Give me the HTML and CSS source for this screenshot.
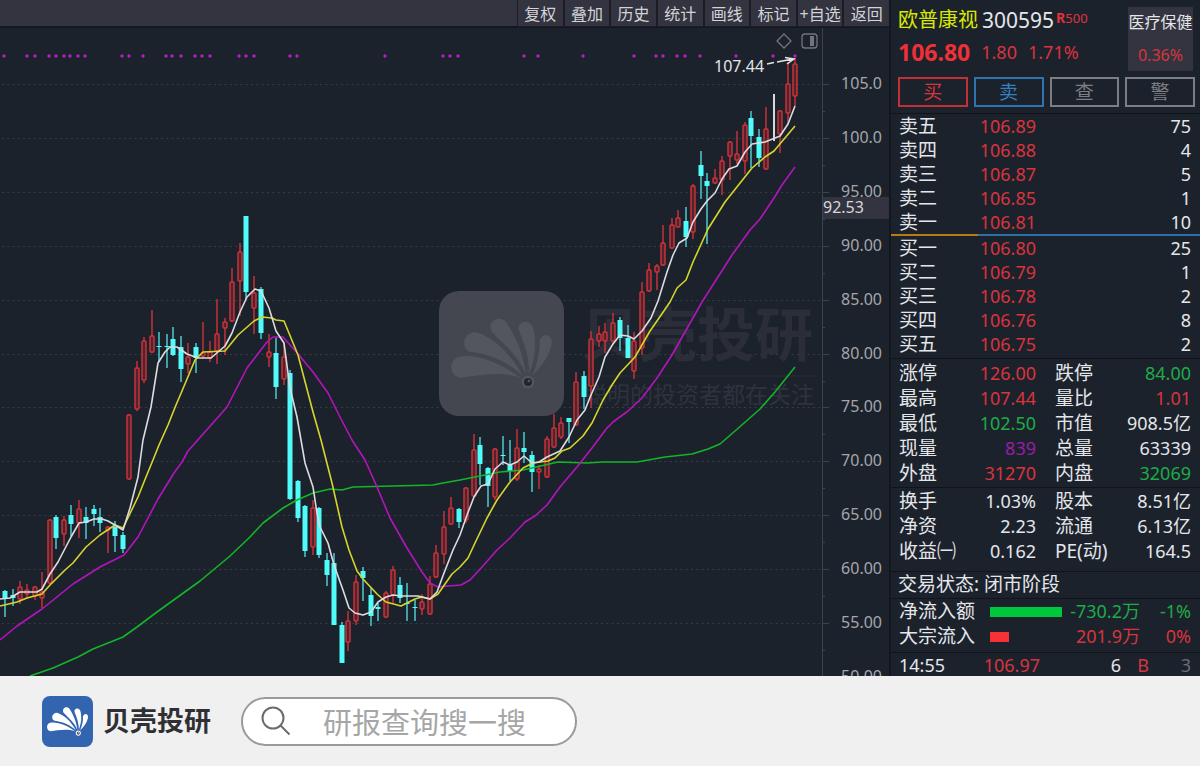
FILE: index.html
```html
<!DOCTYPE html>
<html lang="zh-CN">
<head>
<meta charset="utf-8">
<title>欧普康视 300595</title>
<link rel="stylesheet" href="styles.css">
</head>
<body>
<svg width="0" height="0" class="defs" aria-hidden="true">
  <symbol id="shell" viewBox="0 0 378 378">
    <path d="M246 262C190 222 130 193 68 197C28 202 28 256 64 262C116 256 180 240 246 262Z"/>
    <path d="M252 256C222 196 164 138 110 124C72 126 64 172 94 184C154 190 214 218 252 256Z"/>
    <path d="M262 252C256 188 228 128 202 92C176 70 144 96 160 124C194 160 244 198 262 252Z"/>
    <path d="M273 250C294 198 296 140 282 106C266 80 234 96 242 120C258 158 274 204 273 250Z"/>
    <path d="M282 256C310 228 340 190 341 152C336 126 308 130 304 152C306 188 294 228 282 256Z"/>
    <circle cx="269" cy="275" r="19"/>
    <circle class="shell-pin" cx="269" cy="275" r="12"/>
    <circle cx="272" cy="272" r="4"/>
  </symbol>
</svg>
<main class="terminal">
  <section class="chart-area">
    <nav class="toolbar">
      <div class="tools">
        <button class="tool">复权</button>
        <button class="tool">叠加</button>
        <button class="tool">历史</button>
        <button class="tool">统计</button>
        <button class="tool">画线</button>
        <button class="tool">标记</button>
        <button class="tool">+自选</button>
        <button class="tool">返回</button>
      </div>
    </nav>
    <svg class="chart" viewBox="0 28 889 648" role="img" aria-label="日K线图">
      <g id="grid"></g>
      <g class="watermark">
        <rect class="mark-box" x="439" y="291" width="125" height="125" rx="20"/>
        <use class="mark-shell" href="#shell" x="439" y="291" width="125" height="125"/>
        <text class="mark-name" x="581" y="356">贝壳投研</text>
        <path class="mark-rule" d="M582 376H815"/>
        <text class="mark-slogan" x="584" y="403">聪明的投资者都在关注</text>
      </g>
      <g id="events"></g>
      <g id="candles"></g>
      <g id="averages"></g>
      <g class="peak">
        <text x="714" y="72">107.44</text>
        <path d="M767 64L774 62.500M777 62L793 59M785 57.500L794 59L787 64"/>
      </g>
      <path class="tool-icon" d="M784 34L791 41L784 48L777 41Z"/>
      <rect class="tool-icon" x="802" y="34" width="15" height="14" rx="3"/>
      <rect class="tool-icon-fill" x="810" y="36" width="4" height="10"/>
      <g id="axis"></g>
      <rect class="cursor-box" x="823" y="197" width="66" height="22"/>
      <text class="cursor-text" x="823" y="213">92.53</text>
    </svg>
  </section>
  <aside class="quote">
    <header class="quote-head">
      <div class="quote-main">
        <div class="title-row"><h1 class="stock">欧普康视</h1><span class="code">300595</span><span class="badge"><b>R</b>500</span></div>
        <div class="price-row"><strong class="last">106.80</strong><span>1.80</span><span>1.71%</span></div>
      </div>
      <div class="sector"><span>医疗保健</span><span class="up">0.36%</span></div>
    </header>
    <div class="actions">
      <button class="action buy">买</button>
      <button class="action sell">卖</button>
      <button class="action">查</button>
      <button class="action">警</button>
    </div>
    <div class="block book">
      <table class="book-table">
        <tr><th>卖五</th><td class="up">106.89</td><td>75</td></tr>
        <tr><th>卖四</th><td class="up">106.88</td><td>4</td></tr>
        <tr><th>卖三</th><td class="up">106.87</td><td>5</td></tr>
        <tr><th>卖二</th><td class="up">106.85</td><td>1</td></tr>
        <tr><th>卖一</th><td class="up">106.81</td><td>10</td></tr>
      </table>
    </div>
    <div class="ratio"><span class="ratio-bid"></span></div>
    <div class="block bids">
      <table class="book-table">
        <tr><th>买一</th><td class="up">106.80</td><td>25</td></tr>
        <tr><th>买二</th><td class="up">106.79</td><td>1</td></tr>
        <tr><th>买三</th><td class="up">106.78</td><td>2</td></tr>
        <tr><th>买四</th><td class="up">106.76</td><td>8</td></tr>
        <tr><th>买五</th><td class="up">106.75</td><td>2</td></tr>
      </table>
    </div>
    <div class="block stats">
      <table class="stat-table">
        <tr><th>涨停</th><td class="up">126.00</td><th>跌停</th><td class="down">84.00</td></tr>
        <tr><th>最高</th><td class="up">107.44</td><th>量比</th><td class="up">1.01</td></tr>
        <tr><th>最低</th><td class="down">102.50</td><th>市值</th><td>908.5亿</td></tr>
        <tr><th>现量</th><td class="volume">839</td><th>总量</th><td>63339</td></tr>
        <tr><th>外盘</th><td class="up">31270</td><th>内盘</th><td class="down">32069</td></tr>
      </table>
    </div>
    <div class="block basics">
      <table class="stat-table">
        <tr><th>换手</th><td>1.03%</td><th>股本</th><td>8.51亿</td></tr>
        <tr><th>净资</th><td>2.23</td><th>流通</th><td>6.13亿</td></tr>
        <tr><th>收益㈠</th><td>0.162</td><th>PE(动)</th><td>164.5</td></tr>
      </table>
    </div>
    <div class="block status">交易状态: 闭市阶段</div>
    <div class="block flows">
      <table class="flow-table">
        <tr><th>净流入额</th><td><span class="bar bar-out"></span></td><td class="down">-730.2万</td><td class="down">-1%</td></tr>
        <tr><th>大宗流入</th><td><span class="bar bar-in"></span></td><td class="up">201.9万</td><td class="up">0%</td></tr>
      </table>
    </div>
    <div class="block">
      <table class="tick-table">
        <tr><td>14:55</td><td class="up">106.97</td><td>6</td><td class="up">B</td><td class="dim">3</td></tr>
      </table>
    </div>
  </aside>
</main>
<footer class="footer">
  <svg class="logo" viewBox="0 0 51 51" aria-hidden="true"><rect class="logo-box" width="51" height="51" rx="8"/><use class="logo-shell" href="#shell" width="51" height="51"/></svg>
  <span class="brand">贝壳投研</span>
  <label class="search">
    <svg class="search-icon" viewBox="0 0 30 30" aria-hidden="true"><circle cx="12" cy="12" r="10.500"/><path d="M19.500 19.500L28.500 28.500"/></svg>
    <input type="text" placeholder="研报查询搜一搜" aria-label="研报查询">
  </label>
</footer>
<script src="script.js"></script>
</body>
</html>
```
FILE: styles.css
```css
* { box-sizing: border-box; }
body {
  margin: 0;
  background: #f0f0f0;
  color: #e4e6ea;
  font-family: "Noto Sans", "Noto Sans CJK SC", sans-serif;
}
.defs { position: absolute; }
button { font-family: inherit; margin: 0; padding: 0; }

.terminal {
  display: grid;
  grid-template-columns: minmax(0, 1fr) 311px;
  background: #1c222c;
  overflow: hidden;
}

/* chart */
.toolbar {
  display: flex;
  justify-content: flex-end;
  height: 28px;
  background: #33343f;
  border-bottom: 2px solid #151820;
}
.tools { display: flex; gap: 2px; width: 371px; }
.tool {
  flex: 1;
  min-width: 0;
  border: 0;
  background: #33343f;
  box-shadow: 0 0 0 1px #1a1d27;
  color: #d2d3d8;
  font-size: 16px;
  line-height: 24px;
  padding-top: 2px;
  white-space: nowrap;
}
.chart { display: block; width: 100%; height: auto; }
.chart text { font-family: "Noto Sans", "Noto Sans CJK SC", sans-serif; }
.grid-line { stroke: #363c48; stroke-width: 1; stroke-dasharray: 2 3.300; }
.mark-box { fill: #44474f; }
.mark-shell { fill: #53565e; }
.mark-shell, .logo-shell { --pin: #23262e; }
.shell-pin { fill: var(--pin); }
.logo-shell { --pin: #56606f; fill: #ffffff; }
.mark-name { fill: #2b2d38; font-size: 58px; font-weight: 700; }
.mark-slogan { fill: #2f323d; font-size: 23px; }
.mark-rule { stroke: #2b2d38; stroke-width: 1; }
.event { fill: #b41fc0; }
.rise { stroke: #d2323a; stroke-width: 1.400; fill: #50242c; }
.fall { stroke: #4fd8dc; stroke-width: 1.400; fill: #4ffcfa; }
.fall-body { stroke: none; fill: #4ffcfa; }
.flat { stroke: #d8d8dc; stroke-width: 2; }
.ma { fill: none; stroke-width: 1.600; stroke-linejoin: round; }
.ma5 { stroke: #dcdce0; }
.ma10 { stroke: #d6d62a; }
.ma20 { stroke: #b414bc; }
.ma60 { stroke: #14b428; }
.peak text { fill: #e4e4e6; font-size: 16px; }
.peak path { fill: none; stroke: #e4e4e6; stroke-width: 1.500; }
.tool-icon { fill: none; stroke: #70747c; stroke-width: 1.300; }
.tool-icon-fill { fill: #70747c; }
.axis-line { stroke: #3d434e; stroke-width: 1; fill: none; }
.axis-label { fill: #a4a6ab; font-size: 16px; text-anchor: end; }
.cursor-box { fill: #33343f; }
.cursor-text { fill: #d6d8dc; font-size: 16px; }

/* quote panel */
.quote {
  height: 0;
  min-height: 100%;
  border-left: 2px solid #14171e;
  overflow: hidden;
  font-size: 18px;
}
.quote-head { display: flex; justify-content: space-between; padding: 7px 7px 0 7px; height: 71px; }
.title-row { display: flex; align-items: center; height: 26px; }
.stock { margin: 0 4px 0 0; color: #d8e800; font-size: 20px; font-weight: 400; line-height: 26px; }
.code { font-size: 21px; line-height: 26px; }
.badge { margin-left: 2px; padding-bottom: 5px; color: #e0333b; font-size: 13px; line-height: 20px; }
.badge b { font-size: 14px; }
.price-row { display: flex; align-items: center; gap: 11px; height: 38px; color: #d8343c; }
.last { color: #ee3038; font-size: 23px; }
.sector {
  display: flex;
  flex-direction: column;
  justify-content: space-between;
  align-items: center;
  width: 65px;
  padding: 3px 0 4px;
  background: #33343f;
  font-size: 16px;
  line-height: 24px;
  white-space: nowrap;
}
.actions { display: flex; gap: 6px; padding: 6px 5px 6px 7px; }
.action {
  flex: 1;
  height: 30px;
  background: none;
  border: 2px solid #7c7e84;
  color: #7c7e84;
  font-size: 19px;
  line-height: 26px;
}
.buy { border-color: #c22f37; color: #d8343c; }
.sell { border-color: #2f74b0; color: #3680c0; }
.block { padding: 0 9px 0 8px; border-top: 1px solid #11141a; }
.bids { border-top: 0; padding-bottom: 2px; }
table { width: 100%; border-collapse: collapse; table-layout: fixed; }
th, td { padding: 0; font-weight: 400; line-height: 25px; height: 25px; text-align: right; white-space: nowrap; }
th { font-size: 19px; text-align: left; }
.book-table th, .book-table td { line-height: 24px; height: 24px; }
th:first-child { width: 60px; }
th + td { width: 77px; }
.book-table td:last-child { width: auto; }
.stat-table th + td + th { padding-left: 19px; }
.stat-table td:last-child { width: 76px; }
.ratio { height: 2px; background: #2f70aa; }
.ratio-bid { display: block; width: 28%; height: 2px; background: #b87a18; }
.stats { padding-top: 2px; padding-bottom: 1px; }
.basics { padding-top: 1px; padding-bottom: 7px; }
.status { padding-left: 7px; font-size: 19px; line-height: 24px; padding-bottom: 2px; }
.flows { padding-bottom: 3px; }
.flow-table th:first-child { width: 91px; }
.flow-table th + td { width: 73px; }
.flow-table td:last-child { width: 51px; }
.bar { display: block; height: 10px; }
.bar-out { width: 72px; background: #00c83c; }
.bar-in { width: 19px; background: #f63238; }
.tick-table td:nth-child(1) { width: 60px; text-align: left; }
.tick-table td:nth-child(2) { width: 81px; }
.tick-table td:nth-child(3) { width: 81px; }
.tick-table td:nth-child(4) { width: 28px; }
.up { color: #d8343c; }
.down { color: #1cac48; }
.volume { color: #9a1ca8; }
.dim { color: #6a6d74; }

/* footer */
.footer { display: flex; align-items: center; min-height: 90px; padding: 0 42px; }
.logo { width: 51px; height: 51px; margin-right: 10px; }
.logo-box { fill: #3264b0; }
.brand { color: #303034; font-size: 27px; font-weight: 700; line-height: 40px; }
.search {
  display: flex;
  align-items: center;
  width: 336px;
  height: 49px;
  margin-left: 30px;
  padding: 0 18px;
  background: #ffffff;
  border: 2px solid #9a9a9a;
  border-radius: 25px;
}
.search-icon { flex: none; width: 30px; height: 30px; fill: none; stroke: #6c6c70; stroke-width: 2; }
.search input {
  flex: 1;
  min-width: 0;
  margin-left: 32px;
  padding: 0;
  border: 0;
  outline: 0;
  background: none;
  color: #555555;
  font-family: "Noto Sans CJK SC", sans-serif;
  font-size: 29px;
  font-weight: 400;
  line-height: 40px;
}
.search input::placeholder { color: #a6a6a6; opacity: 1; }
```
FILE: script.js
```javascript
// kind, x, high, low, body top, body bottom (chart units)
const candles = `
f 5 590 617 591 599|f 13 589 606 595 598|r 20 581 604 587 599|r 27 584 598 590 594|r 35 586 600 587 596|r 42 572 608 592 598
r 50 519 584 520 583|f 56 515 549 517 538|r 64 516 546 520 534|f 71 505 536 515 524|r 79 500 538 509 523|f 86 507 539 517 523
f 94 505 526 509 514|f 100 508 532 517 523|r 108 526 553 527 530|f 115 521 552 527 536|f 123 532 553 535 549|r 129 414 480 415 479
r 137 361 411 368 409|r 144 337 383 341 380|r 152 310 353 336 352|f 159 332 362 346 347|f 167 334 368 346 347|f 173 327 356 339 355
f 181 336 382 347 369|r 188 343 373 357 364|f 196 343 373 347 358|r 203 322 359 353 356|r 210 341 362 352 358|r 217 299 364 334 351
r 225 318 355 322 328|r 232 268 322 282 321|r 240 243 316 252 281|f 246 216 299 216 292|r 254 276 334 293 308|f 261 287 339 289 333
r 269 334 367 352 357|f 276 338 399 353 387|r 284 342 385 357 379|f 290 370 500 373 499|f 298 480 522 481 518|f 305 505 557 506 551
r 313 500 555 508 547|f 319 507 558 508 555|f 327 553 586 560 575|f 334 553 625 563 625|f 342 622 663 625 663|r 348 611 651 621 642
r 356 575 625 582 621|f 363 567 601 571 578|f 371 587 626 595 616|f 378 603 621 607 609|r 386 591 618 593 617|r 393 566 603 570 595
f 400 577 603 585 598|f 407 583 621 603 604|f 415 600 621 607 608|r 422 594 615 602 609|r 430 576 615 584 614|r 436 545 578 553 577
r 444 511 564 527 554|r 451 497 525 508 524|f 459 508 528 509 522|r 466 487 523 488 520|r 474 434 497 450 496|f 480 437 485 445 464
f 488 467 507 468 486|r 495 448 500 449 497|f 503 436 465 455 456|f 510 440 481 465 471|r 517 429 481 448 479|f 524 432 463 448 452
f 532 451 492 455 472|r 539 465 489 469 472|r 547 436 478 439 477|r 554 414 448 428 447|r 561 417 439 423 437|f 569 418 443 418 422
r 576 372 426 382 425|f 584 371 409 376 397|r 591 331 408 339 386|r 599 326 347 334 341|r 605 323 353 332 341|r 613 313 344 323 341
f 620 317 351 320 338|f 628 325 358 338 358|r 634 332 379 341 371|r 642 282 355 292 348|r 649 263 292 270 291|r 657 264 290 266 272
r 663 225 266 243 265|r 672 218 249 225 248|r 678 210 227 218 227|f 686 207 247 221 237|r 693 184 239 186 232|f 701 151 199 165 176
f 707 173 244 181 186|r 715 169 184 178 183|r 722 156 195 161 180|r 730 141 180 142 156|r 737 131 164 154 160|r 745 122 174 125 161
f 751 111 168 118 136|f 759 129 167 137 158|r 766 107 170 129 169|w 774 94 141 0 0|r 780 110 153 111 134|r 788 62 124 84 113|r 795 58 106 64 96`;

const averages = {
  ma60: "30,676 53,668 78,657 93,649 123,637 137,627 157,612 200,581 230,556 250,537 263,523 283,508 297,500 313,493 330,489 342,490 353,487 433,485 443,483 460,480 480,476 500,472 523,470 558,462 587,463 603,462 637,462 665,457 692,454 708,449 720,444 735,431 760,409 775,392 795,367",
  ma20: "0,640 17,626 42,609 73,584 100,567 124,555 138,537 158,499 174,473 182,462 188,451 212,424 227,407 247,368 267,342 273,337 283,337 298,354 313,372 328,393 340,417 352,440 365,460 377,487 390,518 407,548 422,572 430,583 438,587 448,586 461,585 470,580 482,567 497,550 510,538 525,522 535,516 547,505 560,487 577,467 592,448 607,428 613,422 628,411 642,398 657,378 672,355 702,302 732,255 750,230 760,219 774,198 782,185 795,167",
  ma10: "0,606 17,602 27,598 42,594 50,585 65,570 73,563 86,547 100,535 115,525 123,528 138,497 146,477 153,460 159,445 168,425 176,405 182,391 195,360 203,352 225,351 238,335 254,321 262,317 272,318 276,320 284,321 298,355 313,412 321,440 332,483 342,527 349,550 357,571 363,579 377,594 386,602 401,606 415,599 422,597 430,599 438,594 452,574 460,567 468,558 475,543 487,518 497,500 510,482 523,468 533,463 548,461 555,458 562,451 570,448 583,436 592,423 603,400 612,385 620,373 635,357 650,331 657,321 670,302 677,288 686,280 693,262 708,229 725,202 752,168 765,157 774,151 795,126",
  ma5: "0,599 10,598 20,592 37,592 42,589 50,574 58,562 71,537 79,523 86,522 94,519 102,519 108,521 115,525 123,530 130,508 138,477 143,440 151,407 158,363 165,352 170,347 177,347 187,354 198,358 211,358 225,346 232,333 240,312 247,297 255,289 261,291 269,308 276,331 284,343 290,388 297,417 305,463 313,487 317,513 320,527 328,543 334,565 343,590 349,608 355,613 363,615 371,612 378,602 386,597 393,595 401,596 418,596 430,599 437,592 444,573 453,550 460,535 467,515 474,497 481,486 488,484 495,469 503,462 510,465 517,462 524,456 532,463 539,462 547,457 560,451 569,437 577,420 585,410 591,395 599,377 605,357 613,344 620,335 628,336 634,339 642,331 651,318 658,301 667,272 673,255 679,243 687,238 693,222 701,209 707,201 715,193 722,179 729,169 737,166 745,152 752,144 765,142 780,136 788,124 795,106"
};

const events = [4,27,35,49,56,64,70,78,85,122,129,143,166,172,181,195,202,210,239,246,254,290,297,385,443,450,458,524,538,583,634,656,663,677,685,700,736,773,795];
const levels = ["105.0","100.0","95.00","90.00","85.00","80.00","75.00","70.00","65.00","60.00","55.00","50.00"];

const put = (id, html) => { document.getElementById(id).innerHTML = html; };

put("candles", candles.trim().split(/[|\n]/).map(row => {
  const [kind, ...n] = row.trim().split(" ");
  const [x, high, low, top, bottom] = n.map(Number);
  const h = bottom - top;
  if (kind === "w") return `<path class="flat" d="M${x} ${high}V${low}"/>`;
  if (kind === "f") return `<path class="fall" d="M${x} ${high}V${low}"/><rect class="fall-body" x="${x - 2.5}" y="${top}" width="5" height="${h}"/>`;
  return `<path class="rise" d="M${x} ${high}V${low}"/><rect class="rise" x="${x - 2}" y="${top}" width="4" height="${h}" rx="1"/>`;
}).join(""));

put("averages", Object.entries(averages).map(([name, pts]) => `<polyline class="ma ${name}" points="${pts}"/>`).join(""));
put("events", events.map(x => `<circle class="event" cx="${x}" cy="56" r="1.7"/>`).join(""));

const rowY = i => Math.round(84 + i * 53.9);
put("grid", levels.slice(0, 11).map((_, i) => `<path class="grid-line" d="M2 ${rowY(i) + 0.5}H822"/>`).join(""));
put("axis", '<path class="axis-line" d="M822.5 28V676"/>' + levels.map((v, i) => {
  const y = rowY(i);
  return `<path class="axis-line" d="M822 ${y + 0.5}H829M822 ${y + 27.5}H825"/><text class="axis-label" x="882" y="${y + 5}">${v}</text>`;
}).join(""));
```
